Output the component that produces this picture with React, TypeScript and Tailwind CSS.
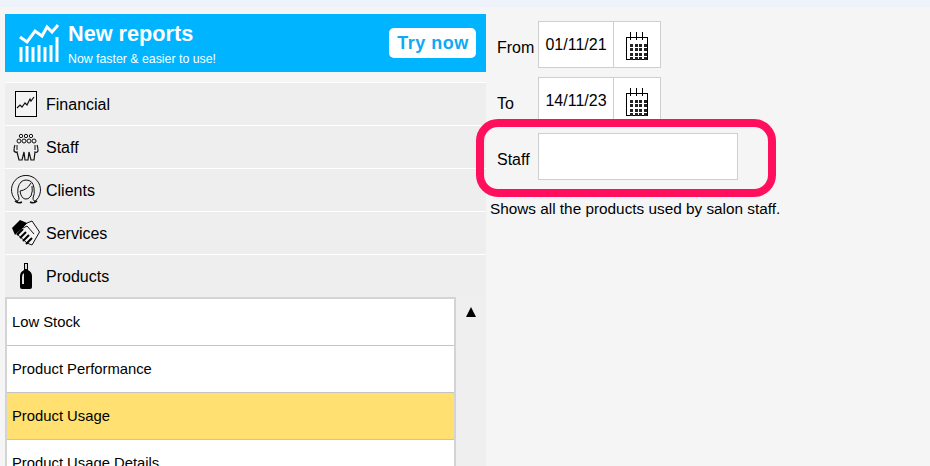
import React from "react";

const font = { fontFamily: '"Liberation Sans", Arial, sans-serif' };

function ChartLogo() {
  return (
    <svg width="42" height="40" viewBox="0 0 42 40" fill="none" stroke="#fff" strokeWidth="3">
      <path d="M2 14 L9 19 L17 8 L24 13 L29 4 L34 9 L40 2" />
      <path d="M3 24V39M9 23V39M15 24V39M21 22V39M27 24V39M33 22V39M39 14V39" />
    </svg>
  );
}

function FinancialIcon() {
  return (
    <svg width="22" height="26" viewBox="0 0 22 26" fill="none">
      <rect x="0.5" y="0.5" width="21" height="25" fill="#f4f4f4" stroke="#000" />
      <path d="M2 17 L5 14 L7 16 L10 12 L12 14 L15 8 L16 10 L19 6" stroke="#111" strokeWidth="1.2" />
    </svg>
  );
}

function StaffIcon() {
  return (
    <svg width="26" height="28" viewBox="0 0 26 28" fill="none" stroke="#111" strokeWidth="1">
      <circle cx="8" cy="3" r="1.7" />
      <circle cx="13" cy="3" r="1.7" />
      <circle cx="18" cy="3" r="1.7" />
      <circle cx="6" cy="8" r="2" />
      <circle cx="11" cy="8" r="2" />
      <circle cx="16" cy="8" r="2" />
      <circle cx="21" cy="8" r="2" />
      <path d="M2 12 Q1 14 1 18 Q3 20 4 19 L6 27 L9 27 L11 19 L12 27 L15 27 L16 19 L18 27 L21 27 L22 19 Q24 20 25 18 Q25 14 24 12" strokeWidth="1.2" />
      <path d="M4 12 V17 M22 12 V17" />
    </svg>
  );
}

function ClientsIcon() {
  return (
    <svg width="32" height="30" viewBox="0 0 32 30" fill="none" stroke="#111" strokeWidth="1">
      <path d="M8 27 A14.5 14.5 0 1 1 24 27" />
      <path d="M5 26 Q9 27 9 23 Q7 19 8 13 Q10 5 16 5 Q23 5 24 13 Q25 19 23 23 Q23 27 27 26" />
      <path d="M10 16 Q17 15 21 8" />
      <path d="M22 11 Q23 16 21 21 Q18 25 15 24 Q11 23 10 16" />
      <path d="M5 26 Q8 29 12 27 M27 26 Q24 29 20 27" strokeWidth="1.4" />
    </svg>
  );
}

function ServicesIcon() {
  return (
    <svg width="28" height="26" viewBox="0 0 28 26">
      <path d="M9 9 L15 3 L20 1 L27.5 12 L20 25 L15 23 L5 14Z" fill="#f4f4f4" stroke="#111" />
      <path d="M0 8 L8 0 L15 3 L8 10 L3 15Z" fill="#000" />
      <path d="M5 15 L11 9 M8 18 L14 12 M11 21 L17 15 M14 24 L20 18" stroke="#000" strokeWidth="2" fill="none" />
      <path d="M11 8 L15 6 L22 14" stroke="#111" fill="none" />
    </svg>
  );
}

function BottleIcon() {
  return (
    <svg width="14" height="28" viewBox="0 0 14 28">
      <path d="M5 1 H9 V8 Q13 10 13 14 V25 Q13 27 11 27 H3 Q1 27 1 25 V14 Q1 10 5 8Z" fill="#000" />
      <path d="M6 2 H8 V7 H6Z M3 15 Q3 12 5 11 V22 H3Z" fill="#ddd" />
    </svg>
  );
}

function CalendarIcon() {
  const dots = Array.from({ length: 16 });
  return (
    <div className="relative h-[28px] w-[22px] shrink-0">
      <div className="absolute left-0 top-[5px] h-[23px] w-[22px] border border-black bg-white" />
      <div className="absolute left-[4px] top-0 h-[8px] w-[1px] bg-black" />
      <div className="absolute left-[10px] top-0 h-[8px] w-[1px] bg-black" />
      <div className="absolute left-[16px] top-0 h-[8px] w-[1px] bg-black" />
      <div className="absolute left-[4px] top-[12px] grid grid-cols-4 gap-[1.5px]">
        {dots.map((_, i) => (
          <div key={i} className="h-[3px] w-[3px] bg-[#222]" />
        ))}
      </div>
    </div>
  );
}

const menu = [
  { label: "Financial", icon: <FinancialIcon /> },
  { label: "Staff", icon: <StaffIcon /> },
  { label: "Clients", icon: <ClientsIcon /> },
  { label: "Services", icon: <ServicesIcon /> },
  { label: "Products", icon: <BottleIcon /> },
];

const reports = ["Low Stock", "Product Performance", "Product Usage", "Product Usage Details"];

function DateField({ label, value }: { label: string; value: string }) {
  return (
    <div className="flex h-[47px] items-center">
      <span className="mt-[7px] w-[41px] text-[16px] text-black">{label}</span>
      <div className="flex h-[47px] w-[123px] border border-[#cfcfcf] bg-white">
        <div className="flex w-[75px] items-start justify-center border-r border-[#cfcfcf] pt-[13px] text-[16px] leading-[20px] text-black">
          {value}
        </div>
        <div className="flex flex-1 items-center justify-center pt-[2px]">
          <CalendarIcon />
        </div>
      </div>
    </div>
  );
}

export default function App() {
  return (
    <div style={font} className="relative h-[466px] w-[930px] overflow-hidden bg-[#f5f5f5]">
      <div className="h-[7px] bg-[#edf2fb]" />
      <div className="flex">
        <div className="w-[486px] shrink-0 pl-[5px] pt-[7px]">
          <div className="flex h-[58px] items-center bg-[#00b4ff] pl-[13px] pr-[10px] text-white">
            <ChartLogo />
            <div className="ml-[8px] flex-1">
              <div className="text-[21.7px] font-bold leading-[26px]">New reports</div>
              <div className="mt-[5px] text-[12.33px] leading-[14px]">Now faster &amp; easier to use!</div>
            </div>
            <div className="flex h-[30px] w-[87px] items-center justify-center rounded-[5px] bg-white pl-[1px] text-[18px] font-bold tracking-[0.5px] text-[#0fa9f5]">
              Try now
            </div>
          </div>

          <div className="mt-[10px] flex flex-col">
            {menu.map((m) => (
              <div key={m.label} className="flex h-[43px] items-center border-t border-white bg-[#eeeeee]">
                <div className="flex w-[41px] shrink-0 items-center justify-center pl-[1px]">{m.icon}</div>
                <span className="mt-[2px] text-[16px] text-black">{m.label}</span>
              </div>
            ))}
          </div>

          <div className="flex h-[169px] bg-[#efefef]">
            <div className="h-[200px] w-[451px] border-x-2 border-t-2 border-[#d4d4d4] bg-white">
              {reports.map((r, i) => (
                <div
                  key={r}
                  className={`flex h-[47px] items-center border-b border-[#c4c4c4] pl-[5px] text-[14.8px] text-black ${
                    i === 2 ? "bg-[#ffe070]" : "bg-white"
                  }`}
                >
                  <span className="mt-[1px]">{r}</span>
                </div>
              ))}
            </div>
            <div className="flex flex-1 justify-center pt-[10px]">
              <div className="h-0 w-0 border-x-[5px] border-b-[10px] border-x-transparent border-b-black" />
            </div>
          </div>
        </div>

        <div className="flex-1 pl-[11px] pt-[14px]">
          <div className="flex flex-col gap-[9px]">
            <DateField label="From" value="01/11/21" />
            <DateField label="To" value="14/11/23" />
            <div className="flex h-[47px] items-center">
              <span className="mt-[7px] w-[41px] text-[16px] text-black">Staff</span>
              <div className="h-[47px] w-[200px] border border-[#cfcfcf] bg-white" />
            </div>
          </div>
          <p className="-ml-[7px] mt-[20px] text-[15.33px] leading-[18px] text-black">
            Shows all the products used by salon staff.
          </p>
        </div>
      </div>

      {/* callout drawn over the screenshot */}
      <div className="absolute left-[476px] top-[119px] h-[78px] w-[300px] rounded-[22px] border-[8px] border-[#ff0f5c]" />
    </div>
  );
}
